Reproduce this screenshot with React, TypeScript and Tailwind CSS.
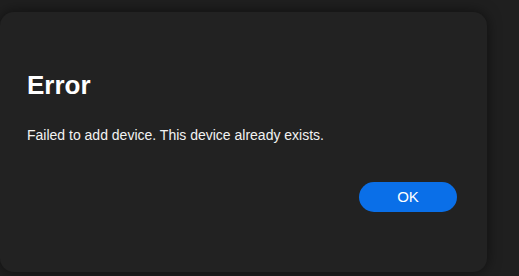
import React from 'react';

export default function App() {
  return (
    <div className="min-h-screen w-full bg-[#1f1f1f] pt-[12px] font-['Liberation_Sans',Arial,sans-serif]">
      <div className="flex h-[260px] w-[487px] flex-col rounded-[14px] bg-[#222222] pl-[27px] pr-[30px] pt-[57px] shadow-[0_0_14px_rgba(0,0,0,0.55)]">
        <h1 className="text-[26px] font-bold leading-[32px] text-white">Error</h1>
        <p className="mt-[24px] text-[14px] leading-[20px] text-[#f2f2f2]">
          Failed to add device. This device already exists.
        </p>
        <div className="mt-[37px] flex justify-end">
          <button className="h-[30px] w-[98px] rounded-full bg-[#0a6fe8] text-[15px] text-white">OK</button>
        </div>
      </div>
    </div>
  );
}
